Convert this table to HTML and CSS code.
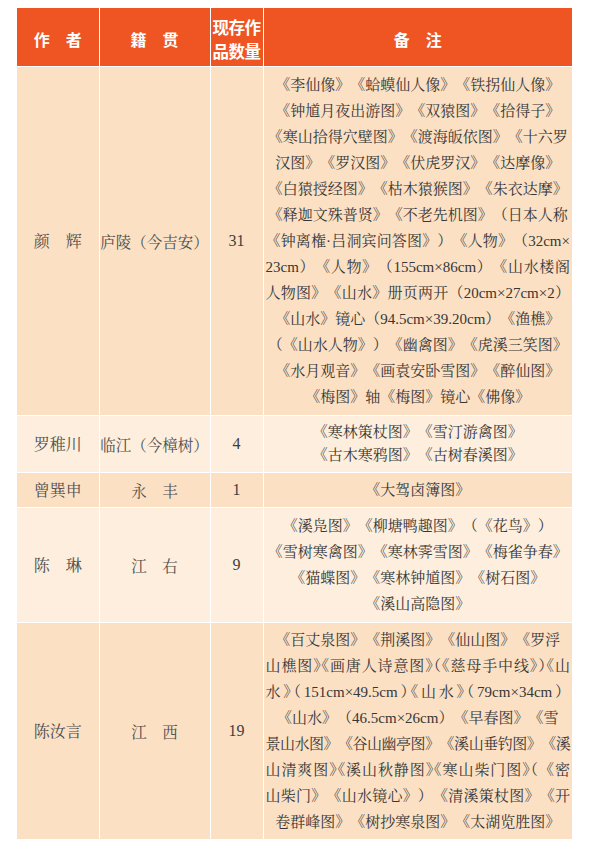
FILE: index.html
```html
<!DOCTYPE html>
<html lang="zh-CN">
<head>
<meta charset="utf-8">
<title>作品表</title>
<link rel="stylesheet" href="styles.css">
</head>
<body>
<table class="works">
  <colgroup>
    <col class="c-author"><col class="c-origin"><col class="c-count"><col class="c-note">
  </colgroup>
  <thead>
    <tr>
      <th>作　者</th>
      <th>籍　贯</th>
      <th class="th-count">现存作<br>品数量</th>
      <th>备　注</th>
    </tr>
  </thead>
  <tbody>
    <tr class="dark">
      <td class="name">颜　辉</td>
      <td class="origin">庐陵（今吉安）</td>
      <td class="num">31</td>
      <td class="note">
        <span class="ln">《李仙像》《蛤蟆仙人像》《铁拐仙人像》</span>
        <span class="ln">《钟馗月夜出游图》《双猿图》《拾得子》</span>
        <span class="ln">《寒山拾得穴壁图》《渡海皈依图》《十六罗</span>
        <span class="ln">汉图》《罗汉图》《伏虎罗汉》《达摩像》</span>
        <span class="ln">《白猿授经图》《枯木猿猴图》《朱衣达摩》</span>
        <span class="ln">《释迦文殊普贤》《不老先机图》（日本人称</span>
        <span class="ln full">《钟离権·吕洞宾问答图》）《人物》（32cm×</span>
        <span class="ln full">23cm）《人物》（155cm×86cm）《山水楼阁</span>
        <span class="ln full">人物图》《山水》册页两开（20cm×27cm×2）</span>
        <span class="ln">《山水》镜心（94.5cm×39.20cm）《渔樵》</span>
        <span class="ln">（《山水人物》）《幽禽图》《虎溪三笑图》</span>
        <span class="ln">《水月观音》《画袁安卧雪图》《醉仙图》</span>
        <span class="ln">《梅图》轴《梅图》镜心《佛像》</span>
      </td>
    </tr>
    <tr class="light r-two">
      <td class="name">罗稚川</td>
      <td class="origin">临江（今樟树）</td>
      <td class="num">4</td>
      <td class="note">
        <span class="ln">《寒林策杖图》《雪汀游禽图》</span>
        <span class="ln">《古木寒鸦图》《古树春溪图》</span>
      </td>
    </tr>
    <tr class="dark r-one">
      <td class="name">曾巽申</td>
      <td class="origin">永　丰</td>
      <td class="num">1</td>
      <td class="note">
        <span class="ln">《大驾卤簿图》</span>
      </td>
    </tr>
    <tr class="light">
      <td class="name">陈　琳</td>
      <td class="origin">江　右</td>
      <td class="num">9</td>
      <td class="note">
        <span class="ln">《溪凫图》《柳塘鸭趣图》（《花鸟》）</span>
        <span class="ln">《雪树寒禽图》《寒林霁雪图》《梅雀争春》</span>
        <span class="ln">《猫蝶图》《寒林钟馗图》《树石图》</span>
        <span class="ln">《溪山高隐图》</span>
      </td>
    </tr>
    <tr class="dark r-last">
      <td class="name">陈汝言</td>
      <td class="origin">江　西</td>
      <td class="num">19</td>
      <td class="note">
        <span class="ln">《百丈泉图》《荆溪图》《仙山图》《罗浮</span>
        <span class="ln full">山樵图<span class="h">》《</span>画唐人诗意图<span class="h">》（《</span>慈母手中线<span class="h">》）《</span>山</span>
        <span class="ln full">水<span class="h">》（</span>151cm×49.5cm<span class="h">）《</span>山水<span class="h">》（</span>79cm×34cm）</span>
        <span class="ln">《山水》（46.5cm×26cm）《早春图》《雪</span>
        <span class="ln full tight">景山水图》《谷山幽亭图》《溪山垂钓图》《溪</span>
        <span class="ln full">山清爽图<span class="h">》《</span>溪山秋静图<span class="h">》《</span>寒山柴门图<span class="h">》（</span>《密</span>
        <span class="ln full">山柴门》《山水镜心》）《清溪策杖图》《开</span>
        <span class="ln">卷群峰图》《树抄寒泉图》《太湖览胜图》</span>
      </td>
    </tr>
  </tbody>
</table>
</body>
</html>
```

FILE: styles.css
```css
html, body {
  margin: 0;
  padding: 0;
  background: #ffffff;
}

body {
  font-family: "Liberation Serif", "Noto Serif CJK SC", "Noto Sans CJK SC", serif;
  color: #3a3a3a;
  text-spacing-trim: space-all;
}

.works {
  border-collapse: collapse;
  border-style: hidden;
  table-layout: fixed;
  width: 555px;
  margin: 8px 0 0 17px;
}

.c-author { width: 82px; }
.c-origin { width: 111px; }
.c-count  { width: 53px; }
.c-note   { width: 309px; }

.works th,
.works td {
  border: 1px solid #ffffff;
  padding: 0;
  text-align: center;
  vertical-align: middle;
}

.works th {
  background: #ee5523;
  color: #ffffff;
  font-family: "Noto Sans CJK SC", sans-serif;
  font-weight: 700;
  font-size: 16px;
  line-height: 24px;
  height: 58px;
  padding-top: 4px;
  box-sizing: border-box;
}

.works th.th-count {
  font-size: 16.5px;
  line-height: 24px;
  letter-spacing: -0.5px;
}

.dark td { background: #fbe0c4; }
.light td { background: #fdeedd; }

.name,
.origin {
  font-size: 16px;
  color: #4e4e4e;
  white-space: nowrap;
}

.origin { font-size: 15.5px; }

.num {
  font-size: 16px;
  color: #3e3e3e;
}

.works .note {
  font-size: 15px;
  line-height: 26px;
  padding: 5px 2px;
  color: #363636;
}

.r-two .note { line-height: 23px; }
.r-one .note { line-height: 24px; }
.works .r-last .note { padding: 4px 2px; }

.ln {
  display: block;
  white-space: nowrap;
}

.ln.full {
  text-align: justify;
  text-align-last: justify;
}

.ln.tight {
  letter-spacing: -0.7px;
}

.h {
  font-feature-settings: "halt" 1;
}
```
